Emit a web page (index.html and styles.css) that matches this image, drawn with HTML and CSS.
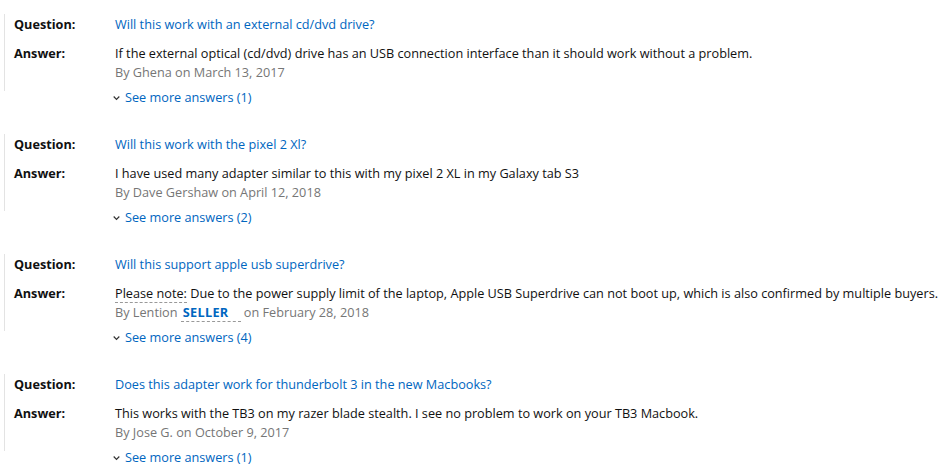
FILE: index.html
```html
<!DOCTYPE html>
<html lang="en">
<head>
    <meta charset="UTF-8">
    <title>Customer questions</title>
    <link rel="stylesheet" href="styles.css">
</head>
<body>
    <div class="qa-list">
        <div class="qa-item">
            <div class="qa-box">
                <div class="qa-row">
                    <span class="qa-label">Question:</span>
                    <a href="#" class="question">Will this work with an external cd/dvd drive?</a>
                </div>
                <div class="qa-row answer-row">
                    <span class="qa-label">Answer:</span>
                    <div class="answer">
                        <div class="answer-text">If the external optical (cd/dvd) drive has an USB connection interface than it should work without a problem.</div>
                        <div class="meta">By Ghena on March 13, 2017</div>
                    </div>
                </div>
            </div>
            <a href="#" class="more"><svg class="chev" width="7" height="6" viewBox="0 0 7 6"><polyline points="0.7,1.5 3.5,4.3 6.3,1.5" fill="none" stroke="#333" stroke-width="1.2"/></svg>See more answers (1)</a>
        </div>

        <div class="qa-item">
            <div class="qa-box">
                <div class="qa-row">
                    <span class="qa-label">Question:</span>
                    <a href="#" class="question">Will this work with the pixel 2 Xl?</a>
                </div>
                <div class="qa-row answer-row">
                    <span class="qa-label">Answer:</span>
                    <div class="answer">
                        <div class="answer-text">I have used many adapter similar to this with my pixel 2 XL in my Galaxy tab S3</div>
                        <div class="meta">By Dave Gershaw on April 12, 2018</div>
                    </div>
                </div>
            </div>
            <a href="#" class="more"><svg class="chev" width="7" height="6" viewBox="0 0 7 6"><polyline points="0.7,1.5 3.5,4.3 6.3,1.5" fill="none" stroke="#333" stroke-width="1.2"/></svg>See more answers (2)</a>
        </div>

        <div class="qa-item">
            <div class="qa-box">
                <div class="qa-row">
                    <span class="qa-label">Question:</span>
                    <a href="#" class="question">Will this support apple usb superdrive?</a>
                </div>
                <div class="qa-row answer-row">
                    <span class="qa-label">Answer:</span>
                    <div class="answer">
                        <div class="answer-text"><span class="note">Please note:</span> Due to the power supply limit of the laptop, Apple USB Superdrive can not boot up, which is also confirmed by multiple buyers.</div>
                        <div class="meta">By Lention <span class="seller">SELLER</span> on February 28, 2018</div>
                    </div>
                </div>
            </div>
            <a href="#" class="more"><svg class="chev" width="7" height="6" viewBox="0 0 7 6"><polyline points="0.7,1.5 3.5,4.3 6.3,1.5" fill="none" stroke="#333" stroke-width="1.2"/></svg>See more answers (4)</a>
        </div>

        <div class="qa-item">
            <div class="qa-box">
                <div class="qa-row">
                    <span class="qa-label">Question:</span>
                    <a href="#" class="question">Does this adapter work for thunderbolt 3 in the new Macbooks?</a>
                </div>
                <div class="qa-row answer-row">
                    <span class="qa-label">Answer:</span>
                    <div class="answer">
                        <div class="answer-text">This works with the TB3 on my razer blade stealth. I see no problem to work on your TB3 Macbook.</div>
                        <div class="meta">By Jose G. on October 9, 2017</div>
                    </div>
                </div>
            </div>
            <a href="#" class="more"><svg class="chev" width="7" height="6" viewBox="0 0 7 6"><polyline points="0.7,1.5 3.5,4.3 6.3,1.5" fill="none" stroke="#333" stroke-width="1.2"/></svg>See more answers (1)</a>
        </div>
    </div>
</body>
</html>
```

FILE: styles.css
```css
body {
    margin: 0;
    font-family: "Open Sans", Arial, sans-serif;
    font-size: 12.7px;
    line-height: 19px;
    color: #111;
    background: #fff;
}

.qa-list {
    padding: 14px 0 0 4px;
}

.qa-item {
    height: 120px;
}

.qa-box {
    border-left: 1px solid #e3e3e3;
    padding: 1px 0 9px 9px;
}

.qa-row {
    display: flex;
}

.answer-row {
    margin-top: 10px;
}

.qa-label {
    width: 101px;
    flex-shrink: 0;
    font-weight: bold;
}

.answer-text {
    white-space: nowrap;
}

.question,
.more {
    color: #0066c0;
    text-decoration: none;
}

.meta {
    color: #767676;
}

.note {
    border-bottom: 1px dashed #999;
}

.seller {
    display: inline-block;
    color: #0066c0;
    font-weight: bold;
    letter-spacing: 0.3px;
    padding: 0 12px 0 2px;
    line-height: 17px;
    border-bottom: 1px dashed #999;
}

.more {
    display: flex;
    align-items: center;
    line-height: 13px;
    margin-left: 109px;
}

.chev {
    margin-right: 5px;
}
```
